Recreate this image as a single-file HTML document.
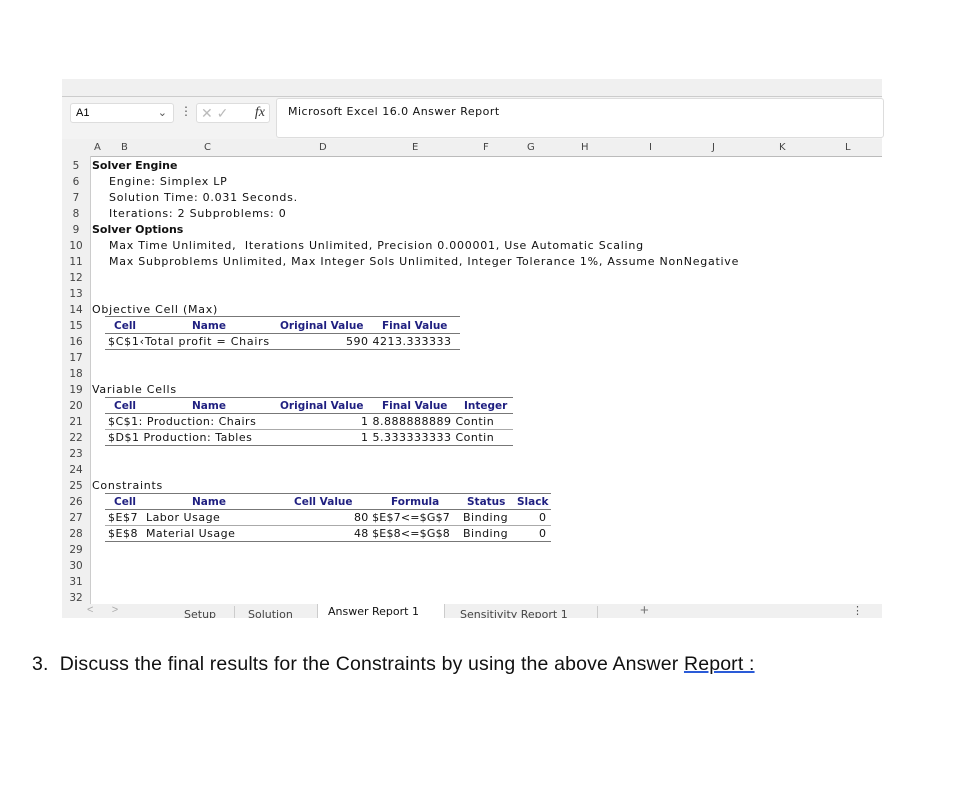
<!DOCTYPE html>
<html><head><meta charset="utf-8"><style>
body{margin:0;width:955px;height:807px;background:#fff;position:relative;overflow:hidden;font-family:"Liberation Sans",sans-serif;}
.a{position:absolute;white-space:nowrap;}
.t{font-family:"DejaVu Sans",sans-serif;font-size:11px;line-height:16px;color:#111;letter-spacing:0.75px;}
.b{font-weight:bold;letter-spacing:0;}
.h{font-weight:bold;color:#1f1f80;font-size:10.5px;letter-spacing:0;}
.rn{position:absolute;left:62px;width:28px;text-align:center;font-family:"DejaVu Sans",sans-serif;font-size:10.5px;line-height:16px;color:#444;}
.ch{position:absolute;top:140px;font-family:"DejaVu Sans",sans-serif;font-size:10px;line-height:16px;color:#444;}
.ln{position:absolute;height:1px;background:#777;}
</style></head><body>
<div class="a" style="left:62px;top:79px;width:820px;height:17px;background:#f0f0f0;border-bottom:1px solid #ccc"></div>
<div class="a" style="left:62px;top:97px;width:820px;height:42px;background:#f3f3f3"></div>
<div class="a" style="left:70px;top:103px;width:102px;height:18px;background:#fff;border:1px solid #ddd;border-radius:3px;font-size:11px;line-height:18px;"><span style="margin-left:5px">A1</span><span style="position:absolute;right:6px;color:#555">⌄</span></div>
<div class="a" style="left:180px;top:104px;font-size:12px;color:#555">⋮</div>
<div class="a" style="left:196px;top:103px;width:72px;height:18px;background:#fff;border:1px solid #ddd;border-radius:3px;font-size:14px;line-height:18px;color:#bbb"><span style="margin-left:4px">✕ ✓</span><i style="position:absolute;right:4px;color:#333;font-family:'Liberation Serif',serif">fx</i></div>
<div class="a" style="left:276px;top:98px;width:606px;height:38px;background:#fff;border:1px solid #ddd;border-radius:3px"></div>
<div class="a t" style="left:288px;top:104px;font-size:11px;letter-spacing:0.5px">Microsoft Excel 16.0 Answer Report</div>
<div class="a" style="left:62px;top:139px;width:820px;height:17px;background:#f0f0f0;border-bottom:1px solid #bbb"></div>
<div class="a" style="left:62px;top:156px;width:28px;height:448px;background:#f0f0f0;border-right:1px solid #ccc"></div>
<div class="ch" style="left:94px">A</div><div class="ch" style="left:121px">B</div><div class="ch" style="left:204px">C</div><div class="ch" style="left:319px">D</div><div class="ch" style="left:412px">E</div><div class="ch" style="left:483px">F</div><div class="ch" style="left:527px">G</div><div class="ch" style="left:581px">H</div><div class="ch" style="left:649px">I</div><div class="ch" style="left:712px">J</div><div class="ch" style="left:779px">K</div><div class="ch" style="left:845px">L</div>
<div class="rn" style="top:158px">5</div><div class="rn" style="top:174px">6</div><div class="rn" style="top:190px">7</div><div class="rn" style="top:206px">8</div><div class="rn" style="top:222px">9</div><div class="rn" style="top:238px">10</div><div class="rn" style="top:254px">11</div><div class="rn" style="top:270px">12</div><div class="rn" style="top:286px">13</div><div class="rn" style="top:302px">14</div><div class="rn" style="top:318px">15</div><div class="rn" style="top:334px">16</div><div class="rn" style="top:350px">17</div><div class="rn" style="top:366px">18</div><div class="rn" style="top:382px">19</div><div class="rn" style="top:398px">20</div><div class="rn" style="top:414px">21</div><div class="rn" style="top:430px">22</div><div class="rn" style="top:446px">23</div><div class="rn" style="top:462px">24</div><div class="rn" style="top:478px">25</div><div class="rn" style="top:494px">26</div><div class="rn" style="top:510px">27</div><div class="rn" style="top:526px">28</div><div class="rn" style="top:542px">29</div><div class="rn" style="top:558px">30</div><div class="rn" style="top:574px">31</div><div class="rn" style="top:590px">32</div>
<div class="a t b" style="left:92px;top:158px">Solver Engine</div>
<div class="a t" style="left:109px;top:174px">Engine: Simplex LP</div>
<div class="a t" style="left:109px;top:190px">Solution Time: 0.031 Seconds.</div>
<div class="a t" style="left:109px;top:206px">Iterations: 2 Subproblems: 0</div>
<div class="a t b" style="left:92px;top:222px">Solver Options</div>
<div class="a t" style="left:109px;top:238px">Max Time Unlimited,&nbsp; Iterations Unlimited, Precision 0.000001, Use Automatic Scaling</div>
<div class="a t" style="left:109px;top:254px">Max Subproblems Unlimited, Max Integer Sols Unlimited, Integer Tolerance 1%, Assume NonNegative</div>
<div class="a t" style="left:92px;top:302px">Objective Cell (Max)</div>
<div class="ln" style="left:105px;top:316px;width:355px"></div>
<div class="a t h" style="left:114px;top:318px">Cell</div><div class="a t h" style="left:192px;top:318px">Name</div><div class="a t h" style="left:280px;top:318px">Original Value</div><div class="a t h" style="left:382px;top:318px">Final Value</div>
<div class="ln" style="left:105px;top:333px;width:355px"></div>
<div class="a t" style="left:108px;top:334px">$C$1‹Total profit = Chairs</div><div class="a t" style="left:346px;top:334px;letter-spacing:0.5px">590&nbsp;4213.333333</div>
<div class="ln" style="left:105px;top:349px;width:355px"></div>
<div class="a t" style="left:92px;top:382px">Variable Cells</div>
<div class="ln" style="left:105px;top:397px;width:408px"></div>
<div class="a t h" style="left:114px;top:398px">Cell</div><div class="a t h" style="left:192px;top:398px">Name</div><div class="a t h" style="left:280px;top:398px">Original Value</div><div class="a t h" style="left:382px;top:398px">Final Value</div><div class="a t h" style="left:464px;top:398px">Integer</div>
<div class="ln" style="left:105px;top:413px;width:408px"></div>
<div class="a t" style="left:108px;top:414px;letter-spacing:0.5px">$C$1: Production: Chairs</div><div class="a t" style="left:361px;top:414px;letter-spacing:0.5px">1&nbsp;8.888888889 Contin</div>
<div class="ln" style="left:105px;top:429px;width:408px;background:#aaa"></div>
<div class="a t" style="left:108px;top:430px;letter-spacing:0.5px">$D$1 Production: Tables</div><div class="a t" style="left:361px;top:430px;letter-spacing:0.5px">1&nbsp;5.333333333 Contin</div>
<div class="ln" style="left:105px;top:445px;width:408px"></div>
<div class="a t" style="left:92px;top:478px">Constraints</div>
<div class="ln" style="left:105px;top:493px;width:446px"></div>
<div class="a t h" style="left:114px;top:494px">Cell</div><div class="a t h" style="left:192px;top:494px">Name</div><div class="a t h" style="left:294px;top:494px">Cell Value</div><div class="a t h" style="left:391px;top:494px">Formula</div><div class="a t h" style="left:467px;top:494px">Status</div><div class="a t h" style="left:517px;top:494px">Slack</div>
<div class="ln" style="left:105px;top:509px;width:446px"></div>
<div class="a t" style="left:108px;top:510px;letter-spacing:0.5px">$E$7&nbsp; Labor Usage</div><div class="a t" style="left:354px;top:510px;letter-spacing:0.2px">80 $E$7&lt;=$G$7</div><div class="a t" style="left:463px;top:510px;letter-spacing:0.5px">Binding</div><div class="a t" style="left:539px;top:510px">0</div>
<div class="ln" style="left:105px;top:525px;width:446px;background:#aaa"></div>
<div class="a t" style="left:108px;top:526px;letter-spacing:0.5px">$E$8&nbsp; Material Usage</div><div class="a t" style="left:354px;top:526px;letter-spacing:0.2px">48 $E$8&lt;=$G$8</div><div class="a t" style="left:463px;top:526px;letter-spacing:0.5px">Binding</div><div class="a t" style="left:539px;top:526px">0</div>
<div class="ln" style="left:105px;top:541px;width:446px"></div>
<div class="a" style="left:62px;top:604px;width:820px;height:14px;background:#f0f0f0;overflow:hidden">
<div class="a" style="left:25px;top:0;font-size:11px;color:#aaa">&lt;&nbsp;&nbsp;&nbsp;&nbsp;&nbsp;&nbsp;&gt;</div>
<div class="a" style="left:122px;top:4px;font-size:11px;color:#444;font-family:'DejaVu Sans',sans-serif">Setup</div>
<div class="a" style="left:172px;top:2px;width:1px;height:12px;background:#ccc"></div>
<div class="a" style="left:186px;top:4px;font-size:11px;color:#444;font-family:'DejaVu Sans',sans-serif">Solution</div>
<div class="a" style="left:255px;top:0;width:126px;height:14px;background:#fff;border-left:1px solid #ccc;border-right:1px solid #ccc"></div>
<div class="a" style="left:266px;top:1px;font-size:11px;color:#111;font-family:'DejaVu Sans',sans-serif">Answer Report 1</div>
<div class="a" style="left:398px;top:4px;font-size:11px;color:#444;font-family:'DejaVu Sans',sans-serif">Sensitivity Report 1</div>
<div class="a" style="left:535px;top:2px;width:1px;height:12px;background:#ccc"></div>
<div class="a" style="left:578px;top:-2px;font-size:15px;color:#777">+</div>
<div class="a" style="left:790px;top:0;font-size:11px;color:#555">⋮</div>
</div>
<div class="a" style="left:32px;top:652px;font-size:19.5px;line-height:24px;color:#111;letter-spacing:0.15px">3.&nbsp;&nbsp;Discuss the final results for the Constraints by using the above Answer <span style="text-decoration:underline;text-decoration-color:#2a5bd7;text-decoration-thickness:2px">Report :</span></div>
</body></html>
